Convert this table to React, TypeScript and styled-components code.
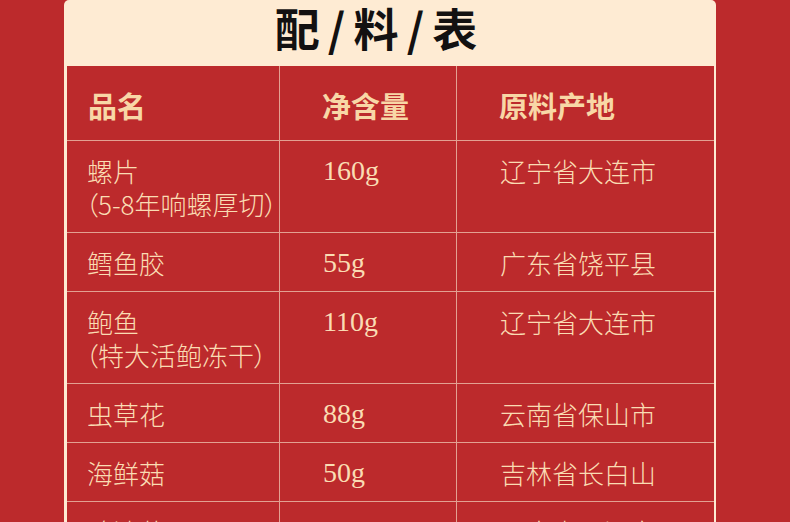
import React from "react";
import styled, {createGlobalStyle} from "styled-components";

type Item = {
    name: string
    note?: string
    weight: string
    origin: string
}

const items: Item[] = [
    {name: '螺片', note: '（5-8年响螺厚切）', weight: '160g', origin: '辽宁省大连市'},
    {name: '鳕鱼胶', weight: '55g', origin: '广东省饶平县'},
    {name: '鲍鱼', note: '（特大活鲍冻干）', weight: '110g', origin: '辽宁省大连市'},
    {name: '虫草花', weight: '88g', origin: '云南省保山市'},
    {name: '海鲜菇', weight: '50g', origin: '吉林省长白山'},
    {name: '鸡油菌', weight: '80g', origin: '云南省丽江市'},
]

const App: React.FC = () => {
    return (
        <Page>
            <GlobalStyle/>
            <Panel>
                <Title>配 / 料 / 表</Title>
                <Table>
                    <HeadRow>
                        <HeadCell first>品名</HeadCell>
                        <HeadCell>净含量</HeadCell>
                        <HeadCell last>原料产地</HeadCell>
                    </HeadRow>
                    {items.map((item) => (
                        <Row key={item.name}>
                            <Cell first>
                                <Line>{item.name}</Line>
                                {item.note ? <Note>{item.note}</Note> : undefined}
                            </Cell>
                            <Cell>
                                <Weight>{item.weight}</Weight>
                            </Cell>
                            <Cell last>
                                <Line>{item.origin}</Line>
                            </Cell>
                        </Row>
                    ))}
                </Table>
            </Panel>
        </Page>
    )
}

export default App

const GlobalStyle = createGlobalStyle`
    html, body {
        margin: 0;
        padding: 0;
        background-color: #bc2a2c;
        overflow: hidden;
    }
`

const Page = styled.div`
    width: 790px;
    height: 522px;
    overflow: hidden;
    background-color: #bc2a2c;
    font-family: "Noto Sans CJK SC", "Noto Sans", sans-serif;
`

const Panel = styled.div`
    width: 652px;
    margin-left: 64px;
    padding: 0 2px 0 3px;
    box-sizing: border-box;
    background-color: #feebd3;
    border-radius: 5px 5px 0 0;
`

const Title = styled.div`
    height: 66px;
    display: flex;
    align-items: center;
    justify-content: center;
    padding: 0 30px 10px 0;
    box-sizing: border-box;
    font-size: 45px;
    line-height: 50px;
    font-weight: 700;
    color: #131111;
    letter-spacing: -1px;
    white-space: pre;
`

const Table = styled.div`
    background-color: #bc2a2c;
    display: flex;
    flex-direction: column;
`

const HeadRow = styled.div`
    display: grid;
    grid-template-columns: 213px 177px 1fr;
    height: 75px;
    border-bottom: 1px solid #e3a192;
    box-sizing: border-box;
`

const Row = styled.div`
    display: grid;
    grid-template-columns: 213px 177px 1fr;
    border-bottom: 1px solid #e3a192;
`

const HeadCell = styled.div<{first?: boolean, last?: boolean}>`
    display: flex;
    align-items: center;
    padding: 4px 0 0 ${(props) => props.first ? '21px' : '42px'};
    border-right: ${(props) => props.last ? 'none' : '1px solid #e3a192'};
    font-size: 29px;
    line-height: 36px;
    font-weight: 700;
    color: #f8d7a6;
`

const Cell = styled.div<{first?: boolean, last?: boolean}>`
    display: flex;
    flex-direction: column;
    padding: 12.5px 0 12.5px ${(props) => props.first ? '20px' : '43px'};
    border-right: ${(props) => props.last ? 'none' : '1px solid #e3a192'};
    color: #fadcb3;
`

const Line = styled.div`
    font-size: 26px;
    line-height: 33px;
    font-weight: 300;
`

const Note = styled.div`
    font-size: 26px;
    line-height: 33px;
    font-weight: 300;
    margin-left: -2px;
    font-feature-settings: "palt";
`

const Weight = styled.div`
    font-family: "Liberation Serif", "DejaVu Serif", serif;
    font-size: 28px;
    line-height: 33px;
`
